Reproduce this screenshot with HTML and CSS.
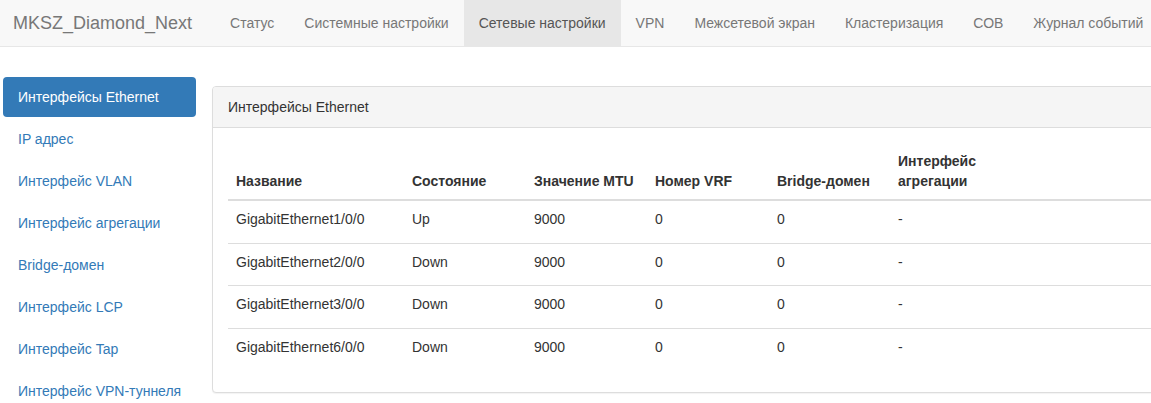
FILE: index.html
```html
<!DOCTYPE html>
<html lang="ru">
<head>
<meta charset="utf-8">
<title>MKSZ_Diamond_Next</title>
<link rel="stylesheet" href="styles.css">
</head>
<body>
<nav class="navbar">
  <a class="brand" href="#">MKSZ_Diamond_Next</a>
  <ul class="topnav">
    <li><a href="#">Статус</a></li>
    <li><a href="#">Системные настройки</a></li>
    <li class="active"><a href="#">Сетевые настройки</a></li>
    <li><a href="#">VPN</a></li>
    <li><a href="#">Межсетевой экран</a></li>
    <li><a href="#">Кластеризация</a></li>
    <li><a href="#">СОВ</a></li>
    <li><a href="#">Журнал событий</a></li>
  </ul>
</nav>
<div class="main">
  <ul class="sidenav">
    <li class="active"><a href="#">Интерфейсы Ethernet</a></li>
    <li><a href="#">IP адрес</a></li>
    <li><a href="#">Интерфейс VLAN</a></li>
    <li><a href="#">Интерфейс агрегации</a></li>
    <li><a href="#">Bridge-домен</a></li>
    <li><a href="#">Интерфейс LCP</a></li>
    <li><a href="#">Интерфейс Tap</a></li>
    <li><a href="#">Интерфейс VPN-туннеля</a></li>
  </ul>
  <div class="panel">
    <div class="panel-heading">Интерфейсы Ethernet</div>
    <div class="panel-body">
      <table class="table">
        <colgroup>
          <col class="c1"><col class="c2"><col class="c3"><col class="c4"><col class="c5"><col class="c6"><col>
        </colgroup>
        <thead>
          <tr>
            <th>Название</th>
            <th>Состояние</th>
            <th>Значение MTU</th>
            <th>Номер VRF</th>
            <th>Bridge-домен</th>
            <th>Интерфейс агрегации</th>
            <th></th>
          </tr>
        </thead>
        <tbody>
          <tr><td>GigabitEthernet1/0/0</td><td>Up</td><td>9000</td><td>0</td><td>0</td><td>-</td><td></td></tr>
          <tr><td>GigabitEthernet2/0/0</td><td>Down</td><td>9000</td><td>0</td><td>0</td><td>-</td><td></td></tr>
          <tr><td>GigabitEthernet3/0/0</td><td>Down</td><td>9000</td><td>0</td><td>0</td><td>-</td><td></td></tr>
          <tr><td>GigabitEthernet6/0/0</td><td>Down</td><td>9000</td><td>0</td><td>0</td><td>-</td><td></td></tr>
        </tbody>
      </table>
    </div>
  </div>
</div>
</body>
</html>
```
FILE: styles.css
```css
html {
  overflow: hidden;
}
body {
  margin: 0;
  width: 1600px;
  font-family: "Liberation Sans", Arial, Helvetica, sans-serif;
  font-size: 14px;
  line-height: 20px;
  color: #333;
  background: #fff;
}
a {
  text-decoration: none;
}
ul {
  list-style: none;
  margin: 0;
  padding: 0;
}

.navbar {
  display: flex;
  align-items: stretch;
  height: 46px;
  background: #f8f8f8;
  border-bottom: 1px solid #e7e7e7;
}
.brand {
  display: block;
  padding: 13px 23px 13px 13px;
  font-size: 18px;
  line-height: 20px;
  color: #777;
  white-space: nowrap;
}
.topnav {
  display: flex;
}
.topnav a {
  display: block;
  padding: 13px 15px;
  line-height: 20px;
  color: #777;
  white-space: nowrap;
}
.topnav .active a {
  background: #e7e7e7;
  color: #555;
}

.main {
  display: flex;
  align-items: flex-start;
  padding-left: 3px;
}
.sidenav {
  width: 193px;
  margin-top: 30px;
  flex-shrink: 0;
}
.sidenav li + li {
  margin-top: 2px;
}
.sidenav a {
  display: block;
  padding: 10px 15px;
  line-height: 20px;
  color: #337ab7;
  border-radius: 4px;
  white-space: nowrap;
}
.sidenav .active a {
  background: #337ab7;
  color: #fff;
}

.panel {
  margin-left: 16px;
  margin-top: 39px;
  width: 1300px;
  border: 1px solid #ddd;
  border-radius: 4px;
  box-shadow: 0 1px 1px rgba(0, 0, 0, 0.05);
  background: #fff;
}
.panel-heading {
  padding: 10px 15px;
  background: #f5f5f5;
  border-bottom: 1px solid #ddd;
  border-radius: 3px 3px 0 0;
  color: #333;
}
.panel-body {
  padding: 15px;
}
.table {
  width: 100%;
  table-layout: fixed;
  border-collapse: collapse;
  border-spacing: 0;
  margin-bottom: 7px;
}
.c1 { width: 176px; }
.c2 { width: 122px; }
.c3 { width: 121px; }
.c4 { width: 122px; }
.c5 { width: 121px; }
.c6 { width: 110px; }
.table th {
  text-align: left;
  font-weight: bold;
  vertical-align: bottom;
  padding: 8px;
  border-bottom: 2px solid #ddd;
}
.table td {
  vertical-align: top;
  padding: 8px 8px 13.5px;
  border-top: 1px solid #ddd;
}
```
